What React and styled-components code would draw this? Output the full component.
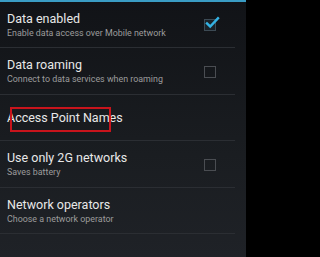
import React from "react";
import styled, { createGlobalStyle } from "styled-components";

const Global = createGlobalStyle`
  html, body { margin: 0; padding: 0; background: #000; }
  body { width: 253px; height: 257px; overflow: hidden; font-family: Roboto, "Noto Sans", sans-serif; }
`;

const Screen = styled.div`
  display: flex;
  width: 253px;
  height: 257px;
  background: #000;
`;

const Panel = styled.div`
  width: 246px;
  height: 257px;
  background: linear-gradient(180deg, #111317 0%, #1a1d21 60%, #1f2227 100%);
  display: flex;
  flex-direction: column;
`;

const TopBar = styled.div`
  height: 2px;
  background: #3a9cc4;
`;

const List = styled.div`
  display: flex;
  flex-direction: column;
`;

const Row = styled.div`
  position: relative;
  height: ${(p) => p.$h}px;
  display: flex;
  align-items: center;
  padding: 0 0 0 7px;
  box-sizing: border-box;
  width: 235px;
`;

const Divider = styled.div`
  height: 1px;
  width: 235px;
  background: #2b2e33;
`;

const Texts = styled.div`
  flex: 1;
  display: flex;
  flex-direction: column;
  padding-top: ${(p) => (p.$single ? 0 : 1)}px;
`;

const Title = styled.div`
  color: #e8e8e8;
  font-size: 12.5px;
  line-height: 16px;
`;

const Sub = styled.div`
  color: #9c9c9c;
  font-size: 8.9px;
  line-height: 13px;
`;

const Box = styled.div`
  position: relative;
  width: 10px;
  height: 10px;
  margin-right: 19px;
  margin-top: 1px;
  border: 1px solid ${(p) => (p.$checked ? "#3c4a54" : "#4a4d52")};
  background: ${(p) => (p.$checked ? "#1b2329" : "transparent")};
`;

const Tick = styled.svg`
  position: absolute;
  left: 1px;
  top: -3px;
  width: 13px;
  height: 12px;
  overflow: visible;
`;

const Highlight = styled.div`
  position: absolute;
  left: 10px;
  top: 12px;
  width: 101px;
  height: 25px;
  box-sizing: border-box;
  border: 2px solid #c8141c;
`;

function Check({ checked }) {
  return (
    <Box $checked={checked}>
      {checked && (
        <Tick viewBox="0 0 13 12">
          <path d="M1 6.5 L4.2 9.5 L12 1.2" fill="none" stroke="#34b3e4" strokeWidth="2.4" strokeLinecap="square" />
        </Tick>
      )}
    </Box>
  );
}

export default function App() {
  return (
    <Screen>
      <Global />
      <Panel>
        <TopBar />
        <List>
          <Row $h={45}>
            <Texts>
              <Title>Data enabled</Title>
              <Sub>Enable data access over Mobile network</Sub>
            </Texts>
            <Check checked />
          </Row>
          <Divider />
          <Row $h={46}>
            <Texts>
              <Title>Data roaming</Title>
              <Sub>Connect to data services when roaming</Sub>
            </Texts>
            <Check />
          </Row>
          <Divider />
          <Row $h={45}>
            <Texts $single>
              <Title>Access Point Names</Title>
            </Texts>
            <Highlight />
          </Row>
          <Divider />
          <Row $h={46}>
            <Texts>
              <Title>Use only 2G networks</Title>
              <Sub>Saves battery</Sub>
            </Texts>
            <Check />
          </Row>
          <Divider />
          <Row $h={45}>
            <Texts>
              <Title>Network operators</Title>
              <Sub>Choose a network operator</Sub>
            </Texts>
          </Row>
          <Divider />
        </List>
      </Panel>
    </Screen>
  );
}
